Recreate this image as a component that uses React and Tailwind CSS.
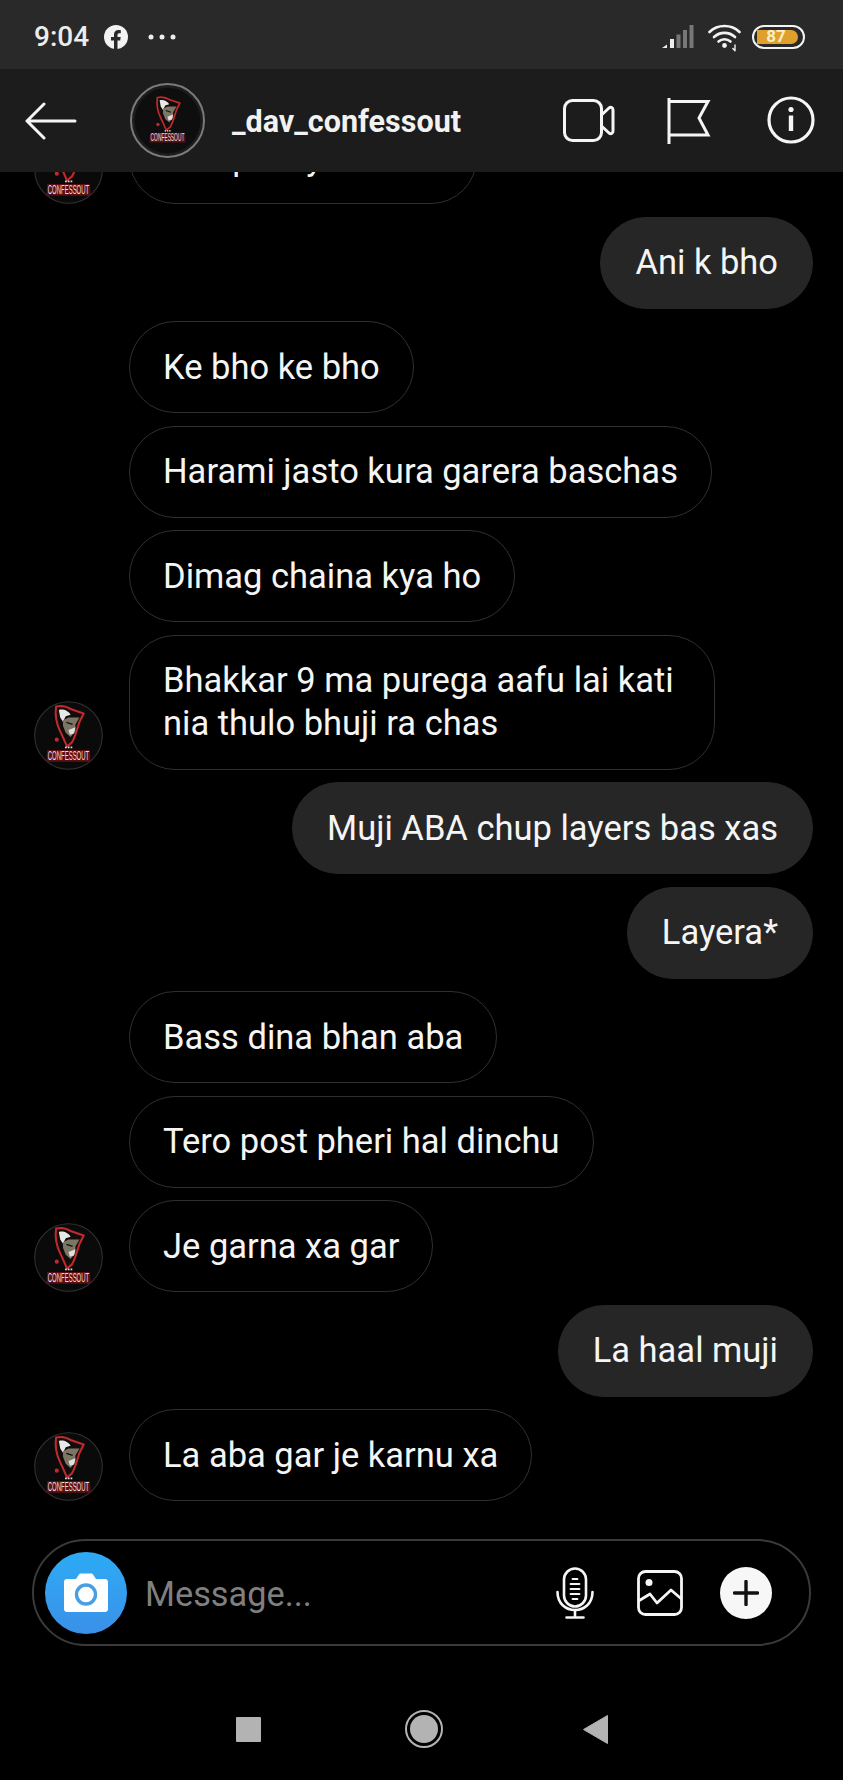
import React from 'react';

const ROWS = [
  { side: 'in', text: 'Aba pani yesto xa.', avatar: true },
  { side: 'out', text: 'Ani k bho' },
  { side: 'in', text: 'Ke bho ke bho' },
  { side: 'in', text: 'Harami jasto kura garera baschas' },
  { side: 'in', text: 'Dimag chaina kya ho' },
  { side: 'in', text: 'Bhakkar 9 ma purega aafu lai kati\nnia thulo bhuji ra chas', avatar: true },
  { side: 'out', text: 'Muji ABA chup layers bas xas' },
  { side: 'out', text: 'Layera*' },
  { side: 'in', text: 'Bass dina bhan aba' },
  { side: 'in', text: 'Tero post pheri hal dinchu' },
  { side: 'in', text: 'Je garna xa gar', avatar: true },
  { side: 'out', text: 'La haal muji' },
  { side: 'in', text: 'La aba gar je karnu xa', avatar: true },
];

const Logo = ({ size, ring }) => (
  <svg width={size} height={size} viewBox="0 0 100 100" className="shrink-0">
    <circle cx="50" cy="50" r="49" fill={ring ? '#0e0e0e' : '#0a0a0a'} stroke={ring ? '#7a7a7a' : '#333'} strokeWidth={ring ? 0 : 1.5} />
    <g transform={ring ? 'translate(8 9) scale(0.84)' : undefined}>
      <path d="M32 8 C40 6 48 8 54 12 L72 18 L66 30 C62 42 60 52 55 60 L48 66 C44 58 42 52 38 44 C34 36 30 22 32 8 Z" fill="#120c0c" stroke="#c02a2e" strokeWidth="3" strokeLinejoin="round" />
      <path d="M36 13 C42 11 50 14 53 20 L46 22 L42 30 L38 24 Z" fill="#e8e8e8" />
      <path d="M42 28 L50 24 L66 24 L60 34 L60 44 L53 52 L46 46 L42 36 Z" fill="#7c7664" />
      <path d="M47 31 L56 34" stroke="#111" strokeWidth="2" />
      <path d="M50 42 L60 38 L58 47 L52 49 Z" fill="#e0e0e0" />
      <circle cx="33" cy="56" r="3" fill="#c02a2e" />
      <rect x="45" y="66" width="2.5" height="2.5" fill="#ddd" />
      <rect x="49" y="66" width="2.5" height="2.5" fill="#ddd" />
      <rect x="53" y="66" width="2.5" height="2.5" fill="#ddd" />
      <path d="M18 88 L82 88 L81 71 L19 71 Z" fill="#5a1013" />
      <text x="50" y="85" textAnchor="middle" textLength="60" lengthAdjust="spacingAndGlyphs" fontSize="18" fill="#eadfdf" fontFamily="'Liberation Sans', sans-serif">CONFESSOUT</text>
    </g>
  </svg>
);

const Bubble = ({ row }) => {
  if (row.side === 'out') {
    return (
      <div className="flex justify-end pr-[30px]">
        <div className="rounded-full bg-[#262626] border border-[#262626] px-[34px] py-[23.5px] whitespace-pre-line">{row.text}</div>
      </div>
    );
  }
  const wrapped = row.text.includes('\n');
  return (
    <div className="flex items-end pl-[34px] gap-[26px]">
      <div className="w-[69px] h-[69px] shrink-0">{row.avatar && <Logo size={69} />}</div>
      <div className={`border border-[#303030] px-[33px] py-[23.5px] whitespace-pre-line ${wrapped ? 'rounded-[46px] w-[586px]' : 'rounded-full'}`}>{row.text}</div>
    </div>
  );
};

const StatusBar = () => (
  <div className="h-[69px] shrink-0 bg-[#292929] flex items-center pl-[34px] pr-[38px] pt-[4px]">
    <span className="text-[28px] font-medium text-[#ececec] leading-none">9:04</span>
    <svg width="24" height="24" viewBox="0 0 24 24" className="ml-[15px]">
      <circle cx="12" cy="12" r="12" fill="#f2f2f2" />
      <path d="M10 24 V15.5 H7 V12 H10 V9.5 C10 6.5 11.8 5 14.4 5 C15.7 5 16.8 5.2 16.8 5.2 V8.2 H15.4 C13.9 8.2 13.5 9.1 13.5 10 V12 H16.7 L16.2 15.5 H13.5 V24 Z" fill="#292929" />
    </svg>
    <svg width="28" height="6" viewBox="0 0 28 6" className="ml-[20px]">
      <circle cx="3" cy="3" r="2.5" fill="#eee" /><circle cx="14" cy="3" r="2.5" fill="#eee" /><circle cx="25" cy="3" r="2.5" fill="#eee" />
    </svg>
    <svg width="32" height="24" viewBox="0 0 32 24" className="ml-auto">
      <path d="M0 23 L5 19.5 V23 Z" fill="#eee" />
      <rect x="8" y="14" width="4" height="9" fill="#eee" />
      <rect x="14.5" y="9.5" width="4" height="13.5" fill="#777" />
      <rect x="21" y="5" width="4" height="18" fill="#777" />
      <rect x="27.5" y="0" width="4" height="23" fill="#777" />
    </svg>
    <svg width="34" height="30" viewBox="0 0 34 30" className="ml-[14px] mt-[2px]" fill="none" stroke="#f2f2f2" strokeWidth="2.6" strokeLinecap="round">
      <path d="M1.5 9 C9.5 1 23.5 1 31.5 9" />
      <path d="M6 14 C12 8.5 21 8.5 27 14" />
      <path d="M10.5 18.5 C14 15.5 19 15.5 22.5 18.5" />
      <circle cx="16.5" cy="22.5" r="2.4" fill="#f2f2f2" stroke="none" />
      <path d="M27 22 V27.5 M24.8 25.5 L27 27.7" strokeWidth="1.4" />
    </svg>
    <div className="ml-[10px] w-[53px] h-[24px] rounded-full border-2 border-[#f4f4f4] p-[3px] flex">
      <div className="w-[41px] h-full bg-[#e0a02c] rounded-l-[2px] rounded-r-full flex items-center justify-center text-[17px] font-bold text-[#fbeec4] leading-none pr-[3px]">87</div>
    </div>
  </div>
);

const Header = () => (
  <div className="h-[103px] shrink-0 bg-[#1c1c1c] flex items-center">
    <svg width="52" height="38" viewBox="0 0 52 38" className="ml-[25px]" fill="none" stroke="#f5f5f5" strokeWidth="3" strokeLinecap="round" strokeLinejoin="round">
      <path d="M50 19 H2 M19 2 L2 19 L19 36" />
    </svg>
    <div className="ml-[53px] w-[75px] h-[75px] rounded-full border-2 border-[#7b7b7b] flex items-center justify-center">
      <Logo size={67} ring />
    </div>
    <span className="ml-[27px] mt-[3px] text-[30.5px] font-bold text-[#f2f2f2] leading-none">_dav_confessout</span>
    <svg width="52" height="43" viewBox="0 0 52 43" className="ml-auto" fill="none" stroke="#f5f5f5" strokeWidth="3" strokeLinejoin="round">
      <rect x="1.5" y="1.5" width="37" height="40" rx="8" />
      <path d="M38.5 16 L46 9 C48 7.5 50 8.5 50 11 V32 C50 34.5 48 35.5 46 34 L38.5 27" />
    </svg>
    <svg width="44" height="46" viewBox="0 0 44 46" className="ml-[52px]" fill="none" stroke="#f5f5f5" strokeWidth="3">
      <path d="M2 0 V46" />
      <path d="M2 3.5 H41 L32 20 L41 37 H2" strokeLinejoin="miter" />
    </svg>
    <svg width="48" height="48" viewBox="0 0 48 48" className="ml-[56px] mr-[28px] mt-[-1px]" fill="none">
      <circle cx="24" cy="24" r="22" stroke="#f5f5f5" strokeWidth="3.2" />
      <circle cx="24" cy="13.5" r="2.6" fill="#f5f5f5" />
      <rect x="21.8" y="19.5" width="4.4" height="15.5" fill="#f5f5f5" />
    </svg>
  </div>
);

const Composer = () => (
  <div className="mx-[32px] h-[107px] shrink-0 rounded-full border-2 border-[#3a3a3a] flex items-center pl-[11px]">
    <div className="w-[82px] h-[82px] rounded-full bg-gradient-to-b from-[#2cabf5] to-[#3a90e8] flex items-center justify-center">
      <svg width="44" height="40" viewBox="0 0 44 40">
        <path d="M3 6 H12 L15 1.5 C15.5 .8 16 .5 17 .5 H27 C28 .5 28.5 .8 29 1.5 L32 6 H41 C42.7 6 44 7.3 44 9 V36 C44 37.7 42.7 39 41 39 H3 C1.3 39 0 37.7 0 36 V9 C0 7.3 1.3 6 3 6 Z" fill="#fff" />
        <circle cx="22" cy="21.5" r="9.5" fill="#fff" stroke="#4a9fe3" strokeWidth="3.4" />
      </svg>
    </div>
    <span className="ml-[18px] text-[34.3px] leading-none text-[#7f7f7f] mt-[4px]">Message...</span>
    <svg width="38" height="52" viewBox="0 0 38 52" className="ml-auto" fill="none" stroke="#f5f5f5" strokeWidth="2.6" strokeLinecap="round">
      <rect x="8" y="1.5" width="22" height="38" rx="11" />
      <path d="M1.5 25 C1.5 49 36.5 49 36.5 25" />
      <path d="M19 43 V50.5 M10.5 50.5 H27.5" />
      <path d="M16.5 12 H21.5 M14.5 17 H23.5 M14.5 22 H23.5 M14.5 27 H23.5 M16.5 32 H21.5" strokeWidth="1.8" />
    </svg>
    <svg width="46" height="46" viewBox="0 0 46 46" className="ml-[43px]" fill="none" stroke="#f5f5f5" strokeWidth="2.8" strokeLinejoin="round">
      <rect x="1.5" y="1.5" width="43" height="43" rx="7" />
      <path d="M1.5 31 L13 24 L20 33 L34 20 L44.5 29" />
      <circle cx="12" cy="12.5" r="3.5" fill="#f5f5f5" stroke="none" />
    </svg>
    <div className="ml-[37px] mr-[37px] w-[52px] h-[52px] rounded-full bg-[#f7f7f7] flex items-center justify-center">
      <svg width="26" height="26" viewBox="0 0 26 26" stroke="#111" strokeWidth="3.4" strokeLinecap="round">
        <path d="M13 1.5 V24.5 M1.5 13 H24.5" />
      </svg>
    </div>
  </div>
);

const NavBar = () => (
  <div className="h-[134px] shrink-0 flex items-center justify-center pt-[32px]">
    <div className="w-[25px] h-[25px] bg-[#b3b3b3] rounded-[1px]"></div>
    <div className="ml-[144px] w-[38px] h-[38px] rounded-full border-2 border-[#b3b3b3] p-[3px]">
      <div className="w-full h-full rounded-full bg-[#b3b3b3]"></div>
    </div>
    <svg width="25" height="29" viewBox="0 0 25 29" className="ml-[140px]">
      <path d="M0.5 14.5 L24.5 0.5 V28.5 Z" fill="#b3b3b3" stroke="#b3b3b3" strokeLinejoin="round" />
    </svg>
  </div>
);

export default function App() {
  return (
    <div className="w-[843px] h-[1780px] bg-black flex flex-col overflow-hidden font-['Roboto',sans-serif] text-[34.5px] leading-[43px] text-[#f5f5f5]">
      <StatusBar />
      <Header />
      <div className="flex-1 min-h-0 overflow-hidden flex flex-col justify-end gap-[12.5px] pb-[38px]">
        {ROWS.map((row, i) => (
          <div key={i} className="shrink-0"><Bubble row={row} /></div>
        ))}
      </div>
      <Composer />
      <NavBar />
    </div>
  );
}
